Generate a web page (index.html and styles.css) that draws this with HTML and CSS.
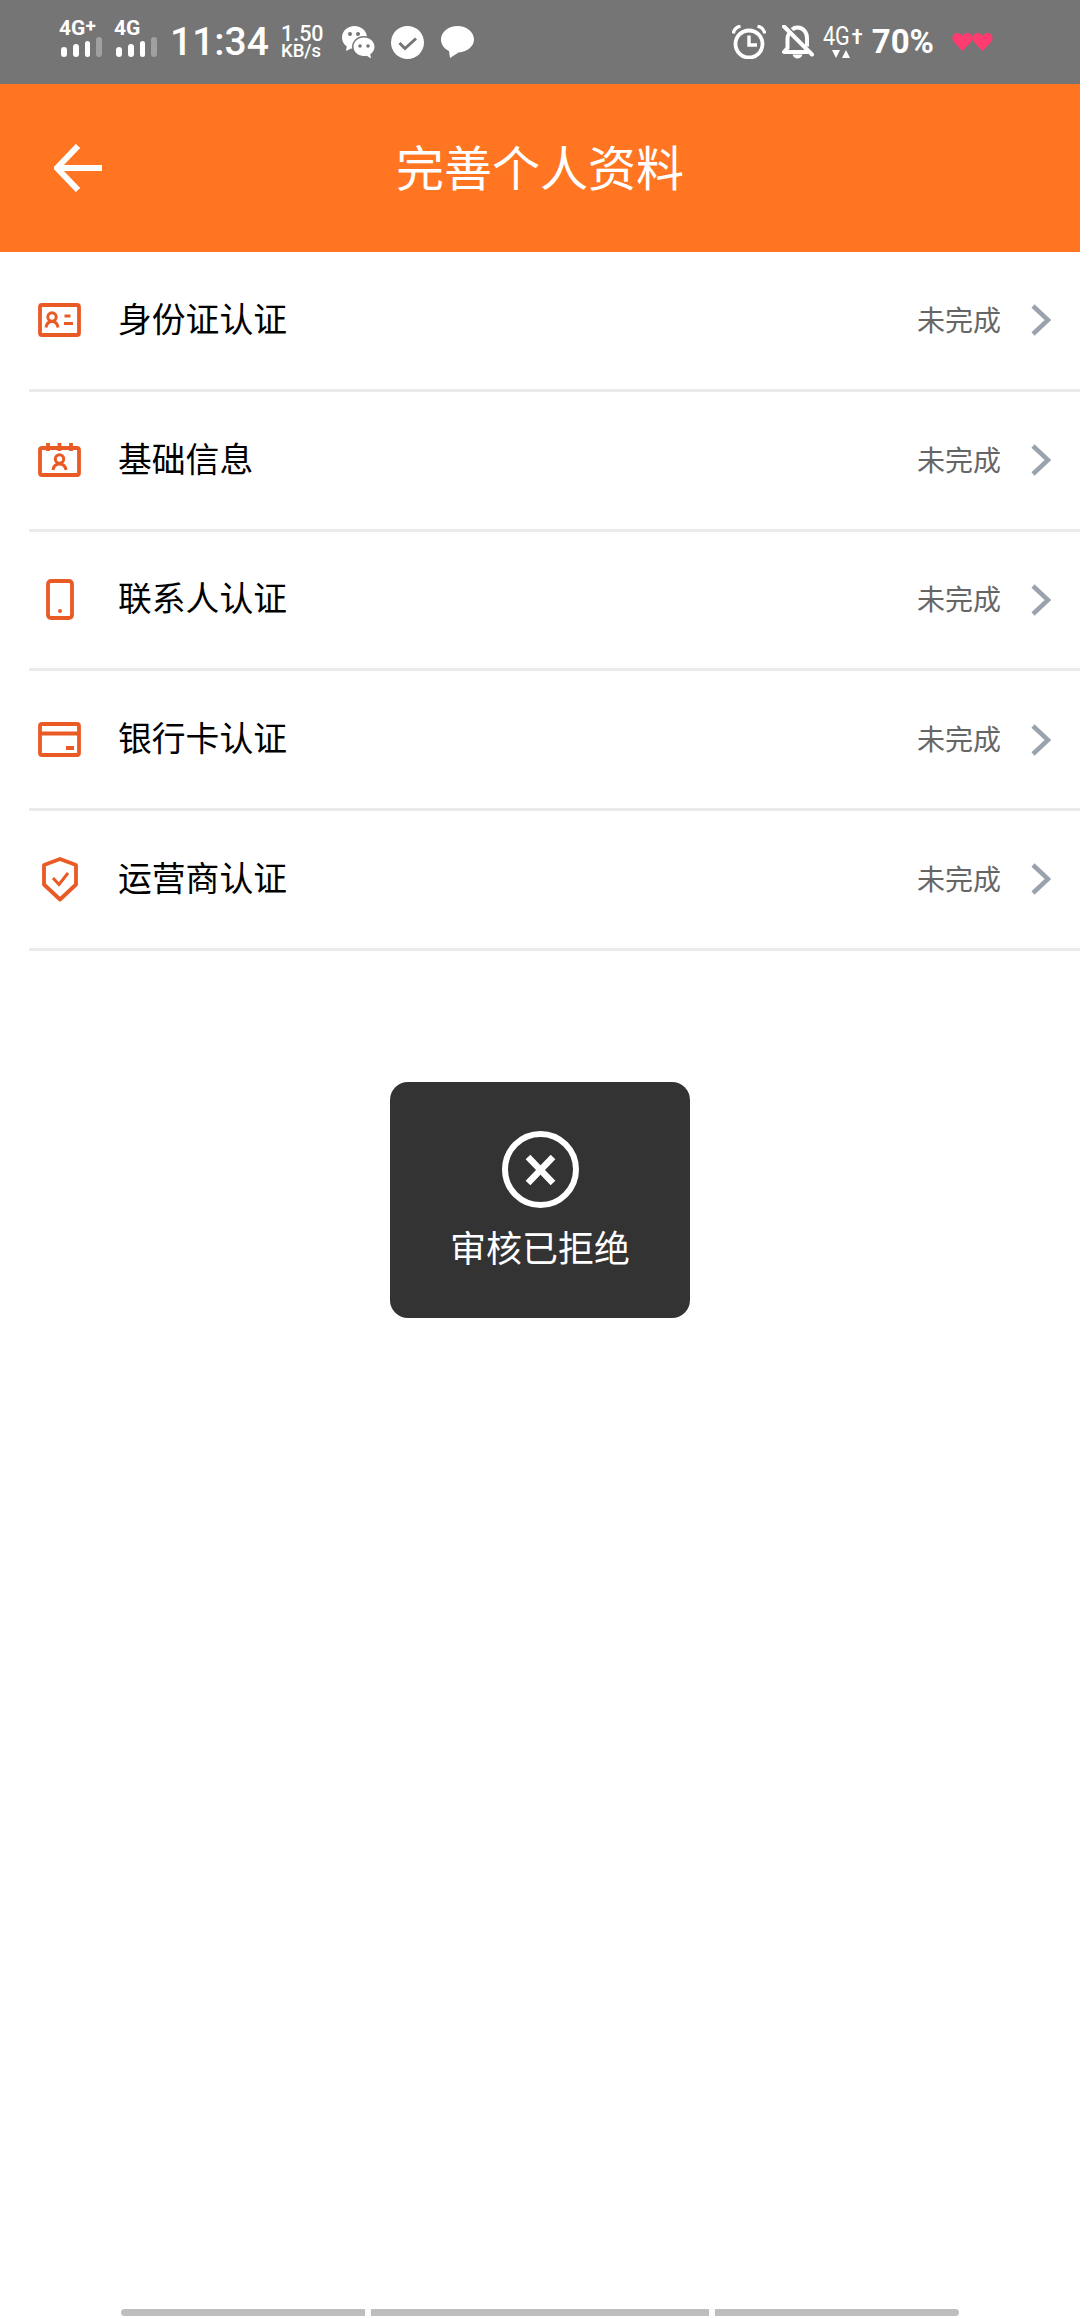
FILE: index.html
```html
<!DOCTYPE html>
<html lang="zh-CN">
<head>
    <meta charset="UTF-8">
    <meta name="viewport" content="width=device-width, initial-scale=1.0">
    <title>完善个人资料</title>
    <link rel="stylesheet" href="styles.css">
</head>
<body>

    <div class="status-bar">
        <div class="status-left">
            <div class="signal">
                <span class="signal-label">4G<sup>+</sup></span>
                <div class="signal-bars"><i class="b1"></i><i class="b2"></i><i class="b3"></i><i class="b4"></i></div>
            </div>
            <div class="signal">
                <span class="signal-label">4G</span>
                <div class="signal-bars"><i class="b1"></i><i class="b2"></i><i class="b3"></i><i class="b4"></i></div>
            </div>
            <span class="time">11:34</span>
            <div class="speed"><span class="speed-num">1.50</span><span class="speed-unit">KB/s</span></div>
            <svg class="ic-wechat" width="33" height="33" viewBox="0 0 33 33">
                <path fill="#fff" d="M12.5 0C5.6 0 0 5 0 11.5c0 3.7 1.9 7 4.8 9.1L4 25l5-2.600c1.100.3 2.300.5 3.500.5C19.400 22.900 25 17.900 25 11.500S19.400 0 12.500 0z"/>
                <circle cx="8" cy="8" r="2" fill="#757575"/>
                <circle cx="16" cy="8" r="2" fill="#757575"/>
                <ellipse cx="22" cy="21" rx="12" ry="11" fill="#757575"/>
                <path fill="#fff" d="M22 11.500c-5.800 0-10.500 4.100-10.500 9.300s4.700 9.300 10.500 9.300c1 0 1.900-.1 2.800-.4l4.200 2.800-.7-4.300c2.600-1.700 4.200-4.400 4.200-7.400 0-5.200-4.700-9.300-10.500-9.300z"/>
                <circle cx="18" cy="20" r="1.800" fill="#757575"/>
                <circle cx="26" cy="20" r="1.800" fill="#757575"/>
            </svg>
            <svg class="ic-check" width="33" height="33" viewBox="0 0 33 33">
                <circle cx="16.500" cy="16.500" r="16.500" fill="#fff"/>
                <path d="M8.500 17l5.500 5.500L25 12.500" fill="none" stroke="#757575" stroke-width="3"/>
            </svg>
            <svg class="ic-bubble" width="33" height="33" viewBox="0 0 33 33">
                <path fill="#fff" d="M16.500 0C7.400 0 0 5.900 0 13.500c0 5 3.200 9.200 8 11.500l1 7 8.500-5.600C25.800 26.100 33 20.600 33 13.500 33 5.900 25.600 0 16.500 0z"/>
            </svg>
        </div>
        <div class="status-right">
            <svg class="ic-alarm" width="34" height="34" viewBox="0 0 34 34">
                <circle cx="17" cy="19" r="13.500" fill="none" stroke="#fff" stroke-width="3.800"/>
                <path d="M17 10.500V20h8" fill="none" stroke="#fff" stroke-width="3.400"/>
                <path d="M1.200 8.500C2 4.500 4.500 2 8.500 1.200M32.800 8.500C32 4.500 29.500 2 25.500 1.200" fill="none" stroke="#fff" stroke-width="3.400"/>
            </svg>
            <svg class="ic-bell" width="32" height="34" viewBox="0 0 32 34">
                <path d="M7 8.500C6 10 5.500 12 5.500 14v9L2 27h24" fill="none" stroke="#fff" stroke-width="4" stroke-linejoin="round"/>
                <path d="M10 4.500C11.500 3.200 13.500 2.500 15.500 2.500c6 0 9.500 5 9.500 11v8" fill="none" stroke="#fff" stroke-width="4"/>
                <path d="M10.500 29.500h10c-.8 2.600-2.800 4-5 4s-4.200-1.400-5-4z" fill="#fff"/>
                <path d="M2 1.500l28 28" stroke="#fff" stroke-width="4" stroke-linecap="round"/>
            </svg>
            <div class="net">
                <div class="net-top"><span class="net-label">4G</span><span class="net-mark">†</span></div>
                <svg class="net-arrows" width="18" height="8" viewBox="0 0 18 8">
                    <path fill="#fff" d="M0 0h8L4 8zM10 8l4-8 4 8z"/>
                </svg>
            </div>
            <span class="battery">70%</span>
            <svg class="ic-hearts" width="41" height="18" viewBox="0 0 41 18">
                <path fill="#ff3b6f" d="M10.500 18L1.500 8.500C-1 5 1 0 5.500 0c2.200 0 4 1.100 5 3 1-1.900 2.800-3 5-3 4.500 0 6.500 5 4 8.500z"/>
                <path fill="#ff3b6f" d="M30.500 18l-9-9.500C19 5 21 0 25.500 0c2.200 0 4 1.100 5 3 1-1.900 2.800-3 5-3 4.500 0 6.500 5 4 8.500z"/>
            </svg>
        </div>
    </div>

    <header class="title-bar">
        <svg class="back" width="48" height="48" viewBox="0 0 48 48">
            <path d="M24 2L3 24l21 22M3 24h45" fill="none" stroke="#fff" stroke-width="6"/>
        </svg>
        <h1>完善个人资料</h1>
    </header>

    <ul class="list">
        <li class="row">
            <span class="row-icon">
                <svg width="43" height="34" viewBox="0 0 43 34">
                    <rect x="2" y="2" width="39" height="30" rx="2" class="line"/>
                    <circle cx="14" cy="14" r="4.200" class="line thin"/>
                    <path d="M8 24.500c.6-4 3-6 6-6s5.400 2 6 6M26.500 13h6M26 20.500h9" class="line thin"/>
                </svg>
            </span>
            <span class="row-name">身份证认证</span>
            <span class="row-state">未完成</span>
            <svg class="chevron" width="20" height="32" viewBox="0 0 20 32"><path d="M2 2l15 14L2 30"/></svg>
        </li>
        <li class="row">
            <span class="row-icon">
                <svg width="43" height="34" viewBox="0 0 43 34">
                    <rect x="2" y="5" width="39" height="27" rx="2" class="line"/>
                    <path d="M10 0v8M21.500 0v8M33 0v8" class="line"/>
                    <circle cx="21.500" cy="16" r="4.200" class="line thin"/>
                    <path d="M15 27c.6-4 3.400-6 6.500-6s5.900 2 6.500 6" class="line thin"/>
                </svg>
            </span>
            <span class="row-name">基础信息</span>
            <span class="row-state">未完成</span>
            <svg class="chevron" width="20" height="32" viewBox="0 0 20 32"><path d="M2 2l15 14L2 30"/></svg>
        </li>
        <li class="row">
            <span class="row-icon">
                <svg width="28" height="41" viewBox="0 0 28 41">
                    <rect x="2" y="2" width="24" height="37" rx="3" class="line"/>
                    <circle cx="14" cy="32" r="2" fill="#ea5a25"/>
                </svg>
            </span>
            <span class="row-name">联系人认证</span>
            <span class="row-state">未完成</span>
            <svg class="chevron" width="20" height="32" viewBox="0 0 20 32"><path d="M2 2l15 14L2 30"/></svg>
        </li>
        <li class="row">
            <span class="row-icon">
                <svg width="43" height="35" viewBox="0 0 43 35">
                    <rect x="2" y="2" width="39" height="31" rx="2" class="line"/>
                    <path d="M2 11.500h39" class="line"/>
                    <rect x="28" y="24" width="8" height="4" fill="#ea5a25"/>
                </svg>
            </span>
            <span class="row-name">银行卡认证</span>
            <span class="row-state">未完成</span>
            <svg class="chevron" width="20" height="32" viewBox="0 0 20 32"><path d="M2 2l15 14L2 30"/></svg>
        </li>
        <li class="row">
            <span class="row-icon">
                <svg width="36" height="45" viewBox="0 0 36 45">
                    <path d="M18 2L34 8v19.500L18 42.500 2 27.500V8z" class="line" stroke-linejoin="round"/>
                    <path d="M11 21l6 6.500L26 16" class="line thin"/>
                </svg>
            </span>
            <span class="row-name">运营商认证</span>
            <span class="row-state">未完成</span>
            <svg class="chevron" width="20" height="32" viewBox="0 0 20 32"><path d="M2 2l15 14L2 30"/></svg>
        </li>
    </ul>

    <div class="toast">
        <svg width="77" height="77" viewBox="0 0 77 77">
            <circle cx="38.500" cy="38.500" r="35.500" fill="none" stroke="#fff" stroke-width="6"/>
            <path d="M26 26l25 26M51 26L26 52" stroke="#fff" stroke-width="6.500"/>
        </svg>
        <p>审核已拒绝</p>
    </div>

    <div class="home-bar">
        <span class="seg seg-left"></span>
        <span class="seg seg-mid"></span>
        <span class="seg seg-right"></span>
    </div>

</body>
</html>
```

FILE: styles.css
```css
* {
    box-sizing: border-box;
}

body {
    margin: 0;
    height: 2316px;
    display: flex;
    flex-direction: column;
    background-color: #fff;
    font-family: "Noto Sans CJK SC", Roboto, sans-serif;
    overflow: hidden;
}

.status-bar {
    height: 84px;
    padding: 0 87px 0 59px;
    display: flex;
    justify-content: space-between;
    align-items: center;
    background-color: #757575;
    color: #fff;
    font-family: Roboto, sans-serif;
}

.status-left,
.status-right {
    display: flex;
    align-items: center;
}

.signal {
    width: 43px;
    margin-right: 12px;
    display: flex;
    flex-direction: column;
    height: 36px;
    justify-content: space-between;
    margin-top: -6px;
}

.signal-label {
    font-size: 21px;
    line-height: 14px;
    font-weight: 700;
    white-space: nowrap;
}

.signal-label sup {
    font-size: 19px;
    line-height: 0;
    vertical-align: 3px;
}

.signal-bars {
    display: flex;
    align-items: flex-end;
    gap: 6px;
    margin-left: 2px;
    height: 16px;
}

.signal-bars i {
    width: 6px;
    border-radius: 3px;
    background-color: #fff;
}

.signal-bars .b1 { height: 10px; }
.signal-bars .b2 { height: 13px; }
.signal-bars .b3 { height: 16px; }
.signal-bars .b4 { height: 20px; background-color: #a0a0a0; }

.time {
    margin-left: 1px;
    font-size: 39px;
    line-height: 40px;
    font-weight: 500;
}

.speed {
    margin-left: 12px;
    display: flex;
    flex-direction: column;
    font-weight: 500;
    margin-top: -1px;
}

.speed-num {
    font-size: 21.500px;
    line-height: 19px;
}

.speed-unit {
    font-size: 18.500px;
    line-height: 17px;
}

.ic-wechat {
    margin-left: 18px;
}

.ic-check {
    margin-left: 16px;
}

.ic-bubble {
    margin-left: 17px;
}

.ic-bell {
    margin-left: 16px;
}

.net {
    margin-left: 9px;
    width: 36px;
    display: flex;
    flex-direction: column;
}

.net-top {
    display: flex;
    height: 20px;
    align-items: center;
}

.net-label {
    font-size: 25px;
    line-height: 20px;
    transform: scaleX(.86);
    transform-origin: left center;
    width: 29px;
}

.net-mark {
    font-size: 20px;
    font-weight: 700;
    line-height: 20px;
}

.net-arrows {
    margin: 3px 0 0 9px;
}

.battery {
    margin-left: 13px;
    font-size: 33px;
    line-height: 34px;
    font-weight: 700;
}

.ic-hearts {
    margin-left: 18px;
}

.title-bar {
    height: 168px;
    position: relative;
    display: flex;
    align-items: center;
    justify-content: center;
    background-color: #ff7521;
}

.title-bar h1 {
    margin: 0 0 7px;
    font-size: 48px;
    font-weight: 400;
    color: #fff;
}

.back {
    position: absolute;
    left: 54px;
    top: 60px;
}

.list {
    list-style: none;
    margin: 0 0 0 29px;
    padding: 0;
}

.row {
    height: 139.75px;
    padding: 0 29px 0 9px;
    display: flex;
    align-items: center;
    border-bottom: 3px solid #e8eaec;
}

.row-icon {
    width: 43px;
    margin-right: 37px;
    display: flex;
    justify-content: center;
}

.row-name {
    flex: 1;
    margin-bottom: 6px;
    font-size: 33.800px;
    color: #000;
}

.row-state {
    margin: 0 30px 3px 0;
    font-size: 28px;
    color: #666;
}

.line {
    fill: none;
    stroke: #ea5a25;
    stroke-width: 3.800;
}

.thin {
    stroke-width: 3;
}

.chevron path {
    fill: none;
    stroke: #9aa3ad;
    stroke-width: 4.500;
}

.toast {
    position: absolute;
    left: 390px;
    top: 1082px;
    width: 300px;
    height: 236px;
    padding-top: 49px;
    border-radius: 18px;
    display: flex;
    flex-direction: column;
    align-items: center;
    background-color: #333;
    color: #fff;
}

.toast p {
    margin: 11px 0 0;
    font-size: 36px;
    line-height: 54px;
}

.home-bar {
    margin-top: auto;
    height: 7px;
    padding-left: 121px;
    display: flex;
    gap: 6px;
}

.seg {
    background-color: #bebebe;
}

.seg-left {
    width: 244px;
    border-radius: 4px 0 0 4px;
}

.seg-mid {
    width: 338px;
}

.seg-right {
    width: 244px;
    border-radius: 0 4px 4px 0;
}
```
